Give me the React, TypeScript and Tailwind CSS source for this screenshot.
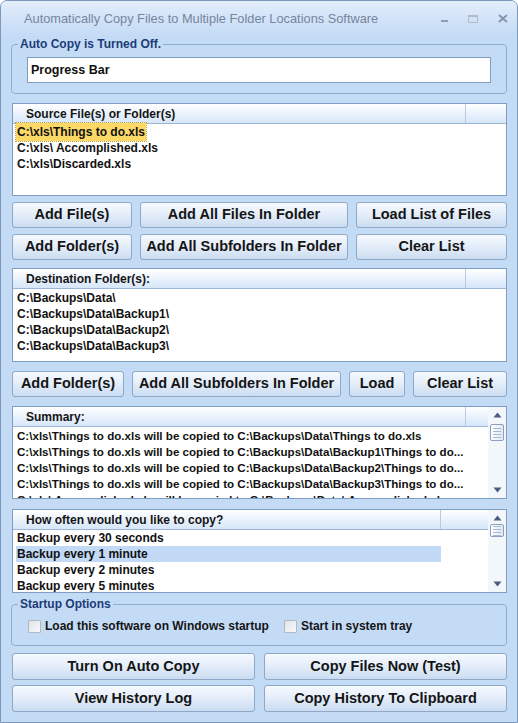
import React from 'react';

const FONT = "font-['Liberation_Sans',Arial,sans-serif]";

function Btn({ label, w }: { label: string; w: string }) {
  return (
    <button
      type="button"
      className={`${w} h-[26px] shrink-0 rounded-[3px] border border-[#8ea8c8] bg-linear-to-b from-[#f6f9fe] via-[#e3edf9] to-[#cbdcf1] text-[14.5px] font-bold text-[#151515]`}
    >
      {label}
    </button>
  );
}

function ScrollBar({ thumbTop, thumbH }: { thumbTop: string; thumbH: string }) {
  return (
    <div className="flex w-[18px] shrink-0 flex-col items-center bg-[#f3f7fc]">
      <svg className="mt-[5px] shrink-0" width="9" height="6" viewBox="0 0 9 6">
        <path d="M4.5 0.5 L8.5 5.5 L0.5 5.5 Z" fill="#4a5d80" />
      </svg>
      <div
        className={`${thumbTop} ${thumbH} w-[14px] shrink-0 rounded-[2px] border border-[#8aa0bf] bg-linear-to-r from-[#ffffff] to-[#dfe8f4] flex flex-col items-center justify-center gap-[2px]`}
      >
        <span className="h-px w-[8px] bg-[#a8b8cf]" />
        <span className="h-px w-[8px] bg-[#a8b8cf]" />
        <span className="h-px w-[8px] bg-[#a8b8cf]" />
        <span className="h-px w-[8px] bg-[#a8b8cf]" />
      </div>
      <div className="flex-1" />
      <svg className="mb-[5px] shrink-0" width="9" height="6" viewBox="0 0 9 6">
        <path d="M0.5 0.5 L8.5 0.5 L4.5 5.5 Z" fill="#4a5d80" />
      </svg>
    </div>
  );
}

function ListHeader({ title, col }: { title: string; col: string }) {
  return (
    <div className="flex h-[20px] shrink-0 items-center border-b border-[#9db6d6] bg-linear-to-b from-[#ffffff] to-[#d6e6f9]">
      <div className={`${col} flex h-full items-center border-r border-[#b9cbe2] pl-[13px] text-[12px] font-bold text-[#151515]`}>
        {title}
      </div>
    </div>
  );
}

function Row({
  children,
  className = '',
  size = 'text-[12px]',
}: {
  children: React.ReactNode;
  className?: string;
  size?: string;
}) {
  return (
    <div className={`flex h-[16px] shrink-0 items-center whitespace-nowrap ${size} font-bold text-[#111] ${className}`}>
      {children}
    </div>
  );
}

function Check({ label }: { label: string }) {
  return (
    <label className="flex items-center gap-[4px] text-[12px] font-bold text-[#151515]">
      <span className="h-[13px] w-[13px] rounded-[1px] border border-[#b3b9c3] bg-linear-to-br from-[#dfe3e8] to-[#f8f9fb]" />
      {label}
    </label>
  );
}

const summary = [
  'C:\\xls\\Things to do.xls will be copied to C:\\Backups\\Data\\Things to do.xls',
  'C:\\xls\\Things to do.xls will be copied to C:\\Backups\\Data\\Backup1\\Things to do...',
  'C:\\xls\\Things to do.xls will be copied to C:\\Backups\\Data\\Backup2\\Things to do...',
  'C:\\xls\\Things to do.xls will be copied to C:\\Backups\\Data\\Backup3\\Things to do...',
  'C:\\xls\\ Accomplished.xls will be copied to C:\\Backups\\Data\\ Accomplished.xls',
];

export default function App() {
  return (
    <div className={`${FONT} flex h-[723px] w-[518px] flex-col overflow-hidden rounded-t-[7px] border border-[#7b98bd] bg-[#c4dbf6]`}>
      {/* title bar */}
      <div className="flex h-[35px] shrink-0 items-center bg-linear-to-b from-[#e4eefb] via-[#d3e3f8] to-[#c4dbf6] pl-[23px] pr-[9px]">
        <span className="text-[12.8px] text-[#76869b]">
          Automatically Copy Files to Multiple Folder Locations Software
        </span>
        <div className="ml-auto flex items-center gap-[20px] text-[#8797ab]">
          <span className="mt-[4px] h-[2px] w-[7px] bg-[#8f9db0]" />
          <span className="h-[8px] w-[10px] border border-t-2 border-[#b0bccb]" />
          <svg width="10" height="9" viewBox="0 0 10 9">
            <path d="M1 1 L9 8 M9 1 L1 8" stroke="#8493a8" strokeWidth="1.8" />
          </svg>
        </div>
      </div>

      <div className="flex flex-col px-[10px]">
        {/* auto copy group */}
        <div className="relative mt-[8px] h-[50px] rounded-[4px] border border-[#8eabd0]">
          <span className="absolute -top-[8px] left-[6px] bg-[#c4dbf6] px-[2px] text-[12px] leading-[14px] font-bold text-[#1d3c76]">
            Auto Copy is Turned Off.
          </span>
          <div className="ml-[15px] mt-[12px] flex h-[26px] w-[464px] items-center border border-[#7f9dc3] bg-white pl-[3px] text-[12.5px] font-bold text-[#111]">
            Progress Bar
          </div>
        </div>

        {/* source list */}
        <div className="ml-px mt-[9px] flex h-[93px] w-[495px] flex-col border border-[#7f9dc3] bg-white">
          <ListHeader title="Source File(s) or Folder(s)" col="w-[453px]" />
          <div className="flex flex-col pl-[3px]">
            <Row>
              <span className="bg-[#fcd867] px-px outline-1 outline-dotted outline-[#c9a33a]">C:\xls\Things to do.xls</span>
            </Row>
            <Row className="pl-px">C:\xls\ Accomplished.xls</Row>
            <Row className="pl-px">C:\xls\Discarded.xls</Row>
          </div>
        </div>

        <div className="ml-px mt-[6px] flex gap-[8px]">
          <Btn label="Add File(s)" w="w-[120px]" />
          <Btn label="Add All Files In Folder" w="w-[208px]" />
          <Btn label="Load List of Files" w="w-[151px]" />
        </div>
        <div className="ml-px mt-[6px] flex gap-[8px]">
          <Btn label="Add Folder(s)" w="w-[120px]" />
          <Btn label="Add All Subfolders In Folder" w="w-[208px]" />
          <Btn label="Clear List" w="w-[151px]" />
        </div>

        {/* destination list */}
        <div className="ml-px mt-[8px] flex h-[94px] w-[495px] flex-col border border-[#7f9dc3] bg-white">
          <ListHeader title="Destination Folder(s):" col="w-[453px]" />
          <div className="flex flex-col pl-[4px] pt-px">
            <Row>C:\Backups\Data\</Row>
            <Row>C:\Backups\Data\Backup1\</Row>
            <Row>C:\Backups\Data\Backup2\</Row>
            <Row>C:\Backups\Data\Backup3\</Row>
          </div>
        </div>

        <div className="ml-px mt-[9px] flex gap-[8px]">
          <Btn label="Add Folder(s)" w="w-[112px]" />
          <Btn label="Add All Subfolders In Folder" w="w-[209px]" />
          <Btn label="Load" w="w-[56px]" />
          <Btn label="Clear List" w="w-[94px]" />
        </div>

        {/* summary */}
        <div className="ml-px mt-[9px] flex h-[93px] w-[495px] border border-[#7f9dc3] bg-white">
          <div className="flex min-w-0 flex-1 flex-col overflow-hidden">
            <ListHeader title="Summary:" col="w-[453px]" />
            <div className="flex flex-col pl-[4px] pt-px">
              {summary.map((s) => (
                <Row key={s} size="text-[11.6px]">{s}</Row>
              ))}
            </div>
          </div>
          <ScrollBar thumbTop="mt-[6px]" thumbH="h-[17px]" />
        </div>

        {/* frequency */}
        <div className="ml-px mt-[10px] flex h-[84px] w-[495px] border border-[#7f9dc3] bg-white">
          <div className="flex min-w-0 flex-1 flex-col overflow-hidden">
            <ListHeader title="How often would you like to copy?" col="w-[428px]" />
            <div className="flex flex-col">
              <Row className="pl-[4px]">Backup every 30 seconds</Row>
              <Row className="ml-[3px] w-[425px] bg-[#c3daf7] pl-px">Backup every 1 minute</Row>
              <Row className="pl-[4px]">Backup every 2 minutes</Row>
              <Row className="pl-[4px]">Backup every 5 minutes</Row>
            </div>
          </div>
          <ScrollBar thumbTop="mt-[3px]" thumbH="h-[13px]" />
        </div>

        {/* startup options */}
        <div className="relative mt-[11px] flex h-[42px] items-start gap-[15px] rounded-[4px] border border-[#8eabd0] pl-[16px] pt-[12px]">
          <span className="absolute -top-[8px] left-[6px] bg-[#c4dbf6] px-[2px] text-[12px] leading-[14px] font-bold text-[#1d3c76]">
            Startup Options
          </span>
          <Check label="Load this software on Windows startup" />
          <Check label="Start in system tray" />
        </div>

        <div className="ml-px mt-[7px] flex gap-[9px]">
          <Btn label="Turn On Auto Copy" w="w-[243px] h-[27px]" />
          <Btn label="Copy Files Now (Test)" w="w-[243px] h-[27px]" />
        </div>
        <div className="ml-px mt-[5px] flex gap-[9px]">
          <Btn label="View History Log" w="w-[243px] h-[27px]" />
          <Btn label="Copy History To Clipboard" w="w-[243px] h-[27px]" />
        </div>
      </div>
    </div>
  );
}
